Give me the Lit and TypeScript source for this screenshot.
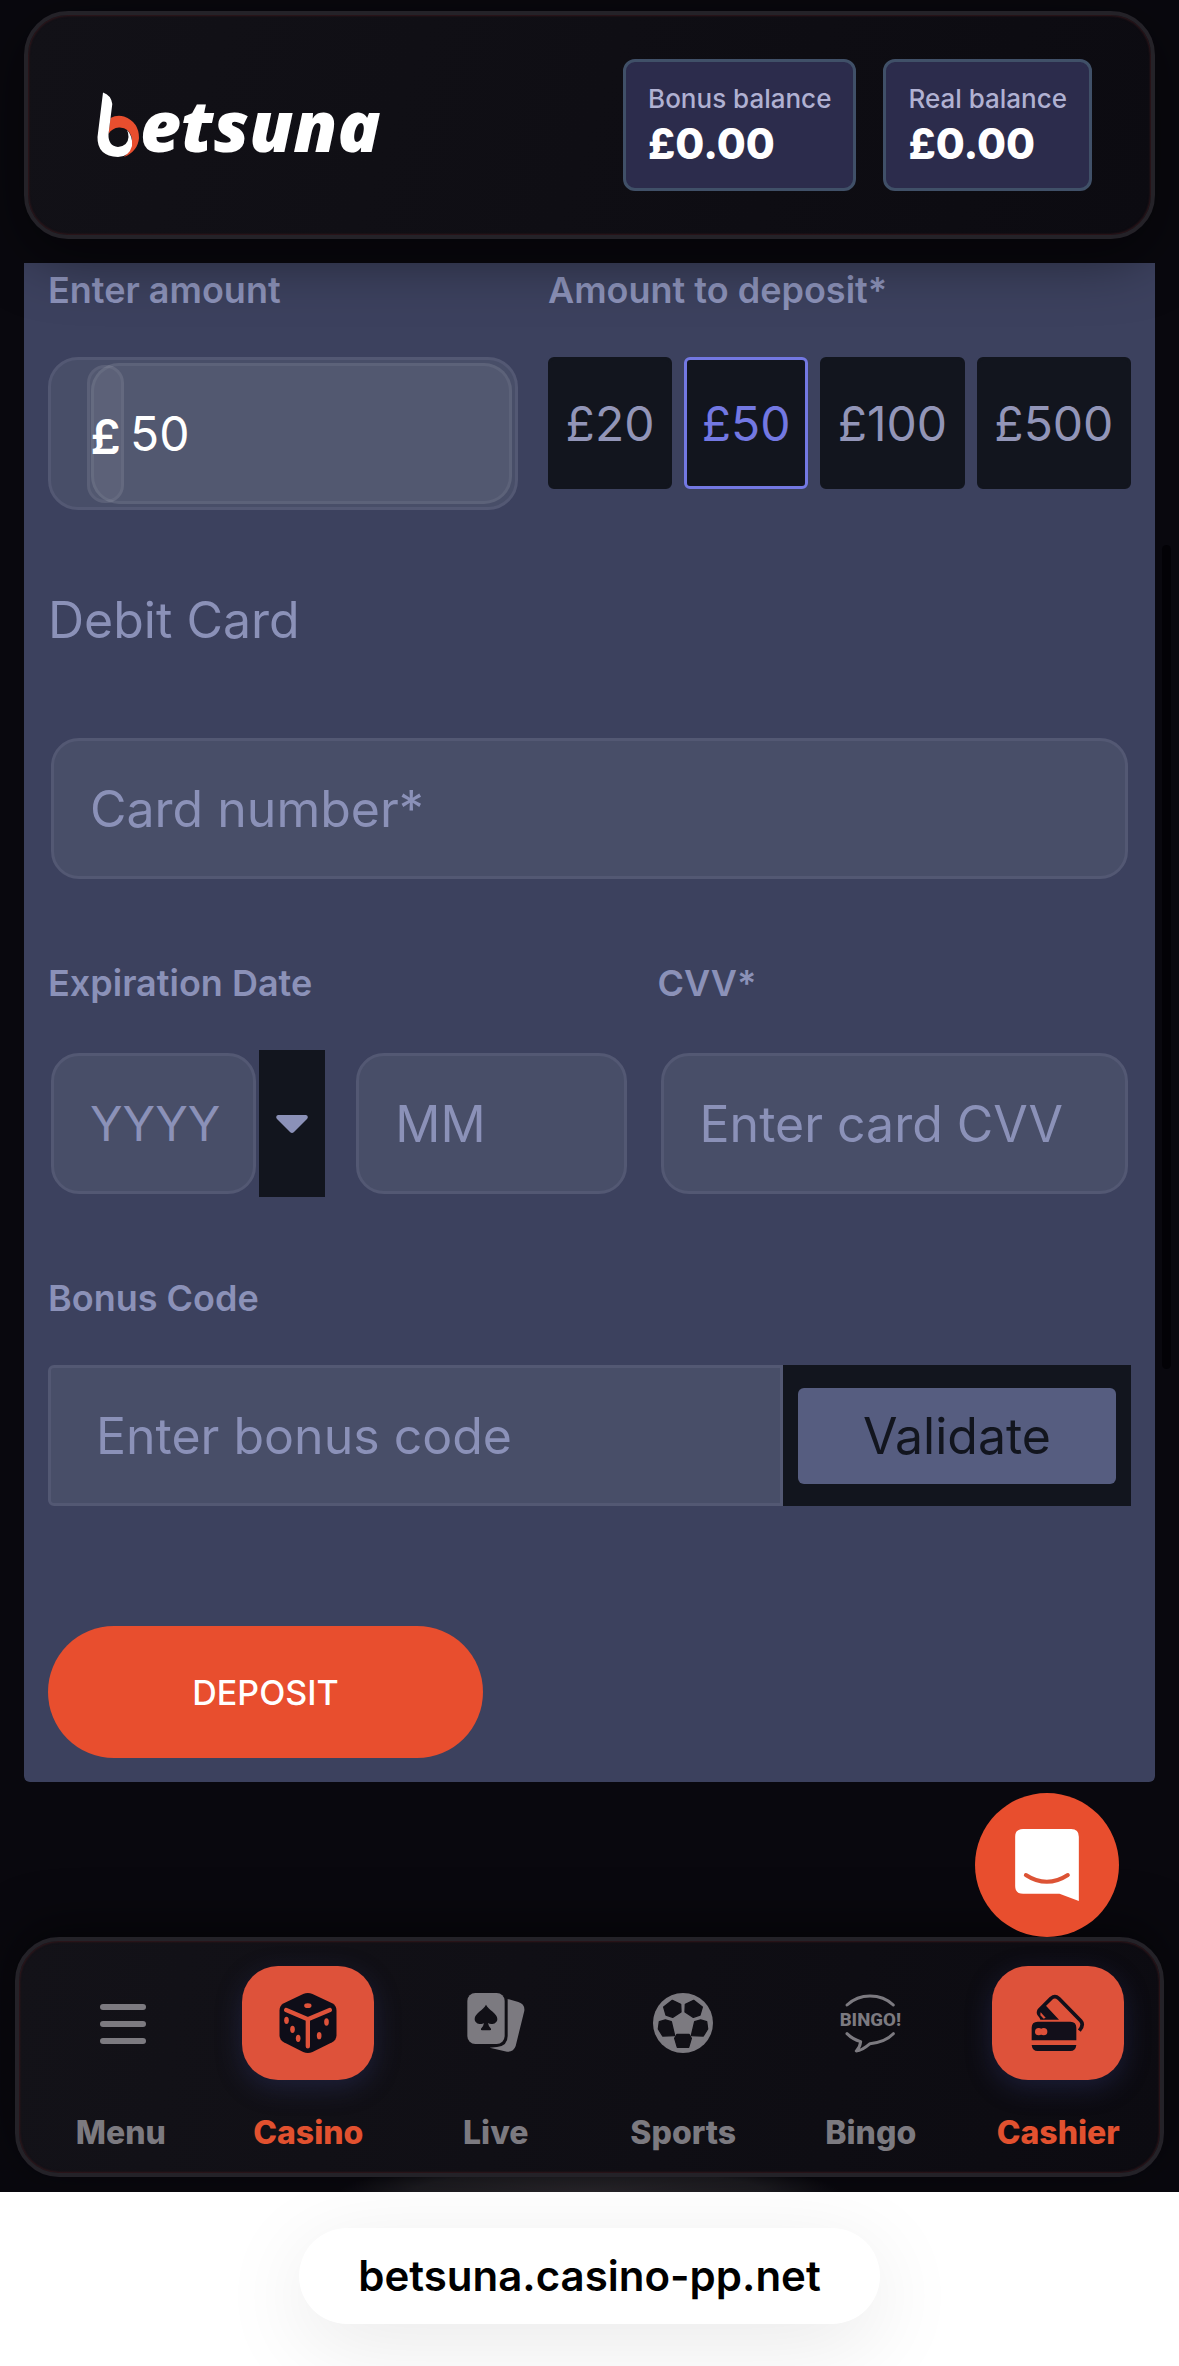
import { LitElement, html, css, svg } from "lit";
import { customElement, property, state } from "lit/decorators.js";
import { classMap } from "lit/directives/class-map.js";

const diceIcon = svg`
  <svg class="icon" viewBox="833 219 179 180" aria-hidden="true">
    <path fill="#0e0d18" d="M908 222Q922 216 936 222L995 250Q1008 257 1008 272V346Q1008 360 995 367L936 396Q922 402 908 396L850 367Q837 360 837 346V272Q837 257 850 250Z"/>
    <g fill="none" stroke="#de523a" stroke-width="13" stroke-linecap="round" stroke-linejoin="round">
      <path d="M857 270L922 298L988 270M922 298V379"/>
    </g>
    <g fill="#de523a">
      <ellipse cx="922" cy="257" rx="11" ry="7"/>
      <ellipse cx="858" cy="301" rx="7" ry="11"/><ellipse cx="876" cy="328" rx="7" ry="11"/><ellipse cx="893" cy="355" rx="7" ry="11"/>
      <ellipse cx="978" cy="306" rx="7" ry="11"/><ellipse cx="956" cy="347" rx="7" ry="11"/>
    </g>
  </svg>`;

const menuIcon = svg`
  <svg class="icon" viewBox="0 0 60 60" aria-hidden="true">
    <g fill="#7c7a80">
      <rect x="9" y="11" width="46" height="6" rx="3"/><rect x="9" y="28" width="46" height="6" rx="3"/><rect x="9" y="45" width="46" height="6" rx="3"/>
    </g>
  </svg>`;

const cardsIcon = svg`
  <svg class="icon" viewBox="197 219 180 180" aria-hidden="true">
    <rect x="201" y="219" width="112" height="153" rx="24" fill="#7c7a80"/>
    <path fill="#7c7a80" d="M322 237L354 246Q374 252 372 272L346 378Q340 396 320 395L268 383L290 381Q322 378 322 348Z"/>
    <path fill="#111016" d="M257 254C265 270 291 280 291 297C291 312 271 316 263 309Q264 318 272 326Q274 331 268 331H246Q240 331 242 326Q250 318 251 309C243 316 223 312 223 297C223 280 249 270 257 254Z"/>
  </svg>`;

const ballPanels = svg`
  <path d="M817 241L842 253L843 276L818 292L798 285L791 261Z"/>
  <path d="M796 300L814 305L824 347L788 348L775 327L778 305Z"/>`;

const ballIcon = svg`
  <svg class="icon" viewBox="759 219 180 180" aria-hidden="true">
    <circle cx="849" cy="309" r="90" fill="#7c7a80"/>
    <g fill="#111016" stroke="#111016" stroke-width="4" stroke-linejoin="round">
      ${ballPanels}
      <g transform="translate(1698 0) scale(-1 1)">${ballPanels}</g>
      <path d="M831 343H867L874 355L866 382H832L824 355Z"/>
    </g>
  </svg>`;

const bingoIcon = svg`
  <svg class="icon icon-wide" viewBox="414 215 195 180" aria-hidden="true">
    <g fill="none" stroke="#7c7a80" stroke-width="9" stroke-linecap="round" stroke-linejoin="round">
      <path d="M441 251Q470 224 510 224Q552 224 580 251"/>
      <path d="M441 337Q458 354 482 361Q480 378 469 389Q486 388 510 367Q556 362 580 337"/>
    </g>
    <text class="bingo-text" x="511" y="315" text-anchor="middle">BINGO!</text>
  </svg>`;

const cashierIcon = svg`
  <svg class="icon" viewBox="387 759 180 180" aria-hidden="true">
    <g fill="none" stroke="#120f1a" stroke-width="11" stroke-linejoin="round">
      <path d="M433 834Q413 823 421 810L456 775Q468 765 479 775L545 842Q556 854 541 872"/>
    </g>
    <path fill="#120f1a" d="M438 794L480 839H424L419 826L430 826L420 814Z"/>
    <path fill="#dd5039" d="M425 817L440 833L434 836L424 826Z"/>
    <path fill="#120f1a" d="M398 901V863Q398 845 416 845H514Q532 845 532 863V901ZM398 915H532Q530 933 514 933H416Q400 933 398 915Z"/>
    <circle cx="419" cy="875" r="11" fill="#dd5039"/><circle cx="434" cy="875" r="11" fill="#dd5039"/>
  </svg>`;

interface NavEntry {
  label: string;
  icon: unknown;
  active?: boolean;
}

const NAV: NavEntry[] = [
  { label: "Menu", icon: menuIcon },
  { label: "Casino", icon: diceIcon, active: true },
  { label: "Live", icon: cardsIcon },
  { label: "Sports", icon: ballIcon },
  { label: "Bingo", icon: bingoIcon },
  { label: "Cashier", icon: cashierIcon, active: true },
];

@customElement("balance-box")
class BalanceBox extends LitElement {
  @property() label = "";
  @property() value = "";

  static styles = css`
    :host {
      display: block;
      box-sizing: border-box;
      padding: 22px 22px 14px;
      border: 3px solid #405068;
      border-radius: 12px;
      background: #2c2c4c;
    }
    .label {
      font-size: 26px;
      line-height: 30px;
      font-weight: 500;
      color: #b0b1d2;
    }
    .value {
      font-size: 42px;
      line-height: 60px;
      font-weight: 800;
      color: #fff;
    }
  `;

  render() {
    return html`<div class="label">${this.label}</div>
      <div class="value">${this.value}</div>`;
  }
}

@customElement("site-header")
class SiteHeader extends LitElement {
  static styles = css`
    :host {
      display: flex;
      align-items: center;
      justify-content: space-between;
      box-sizing: border-box;
      padding: 44px 59px 44px 68px;
      border: 4px solid #242228;
      border-radius: 44px;
      background: linear-gradient(110deg, #121117, #0c0b11);
      box-shadow: 0 16px 60px rgba(0, 0, 0, 0.5), inset 0 0 2px 1px #32171b;
    }
    .logo {
      display: flex;
      align-items: flex-end;
      color: #fff;
      text-decoration: none;
    }
    .mark {
      display: block;
      width: 44px;
      height: 66px;
    }
    .word {
      font: italic 800 71px/66px "Open Sans", "Noto Sans", sans-serif;
    }
    .balances {
      display: flex;
      gap: 27px;
    }
  `;

  render() {
    return html`
      <a class="logo" href="#home" aria-label="betsuna">
        <svg class="mark" viewBox="96 92 44 66" aria-hidden="true">
          <path fill="#e84e2e" d="M110.5 118Q117 114.500 124 116.500Q139 122 139 138Q138 151 124 157Q133 149 132 138Q129 127 119 127.500Q112 128 108.500 134Z"/>
          <path fill="#fff" d="M103 92.500Q111 95 112.300 104L108.500 134Q108 146 118 147Q128 146 128.500 137Q128.500 133 127 130Q133 136 132 146Q129 157 118 157Q97 156 97.500 137Z"/>
        </svg>
        <span class="word">etsuna</span>
      </a>
      <div class="balances">
        <balance-box label="Bonus balance" value="£0.00"></balance-box>
        <balance-box label="Real balance" value="£0.00"></balance-box>
      </div>
    `;
  }
}

@customElement("deposit-form")
class DepositForm extends LitElement {
  @state() private amount = 50;

  static styles = css`
    :host {
      display: block;
    }
    form {
      box-sizing: border-box;
      padding: 1px 24px 24px;
      border-radius: 0 0 6px 6px;
      background: #3c415e;
      color: #8b91b8;
    }
    input,
    button {
      box-sizing: border-box;
      margin: 0;
      min-width: 0;
      font: inherit;
      font-size: 50px;
    }
    .row {
      display: grid;
      column-gap: 30px;
    }
    .amounts {
      grid-template-columns: 470fr 583fr;
    }
    .card-row {
      grid-template-columns: 277fr 276fr 473fr;
      margin-top: 75px;
      column-gap: 28px;
    }
    .label {
      display: block;
      margin-bottom: 41px;
      font-size: 36px;
      line-height: 52px;
      font-weight: 600;
    }
    .field {
      display: block;
      width: 100%;
      height: 141px;
      padding: 0 36px;
      border: 3px solid #535873;
      border-radius: 28px;
      outline: none;
      background: #484e68;
      color: #fff;
    }
    .field::placeholder {
      color: #8b91b8;
      opacity: 1;
    }
    .inset {
      padding: 3px;
    }
    .money {
      position: relative;
      box-sizing: border-box;
      height: 153px;
      padding: 3px 3px 3px 40px;
      border: 3px solid #535873;
      border-radius: 30px;
      background: #484e68;
    }
    .money-input {
      border-color: rgba(255, 255, 255, 0.06);
      background: rgba(255, 255, 255, 0.06);
      font-size: 48px;
    }
    .sign {
      position: absolute;
      left: 36px;
      top: 5px;
      box-sizing: border-box;
      width: 37px;
      height: 138px;
      border: 3px solid rgba(255, 255, 255, 0.05);
      border-radius: 18px;
      background: rgba(255, 255, 255, 0.06);
      color: #fff;
      font-size: 48px;
      line-height: 138px;
      font-weight: 600;
      display: flex;
      justify-content: center;
    }
    .chips {
      display: flex;
      gap: 12px;
    }
    .chip {
      flex: 1 1 auto;
      height: 132px;
      padding: 0;
      border: 3px solid #12151e;
      border-radius: 6px;
      background: #12151e;
      color: #9295b8;
      font-size: 48px;
    }
    .chip.selected {
      border-color: #7378e2;
      color: #7378e2;
    }
    h2 {
      margin: 74px 0 79px;
      font-size: 50px;
      line-height: 72px;
      font-weight: 400;
    }
    .year {
      display: flex;
    }
    .year .inset {
      flex: 1;
    }
    .year .field {
      padding-right: 8px;
      font-size: 48px;
    }
    .drop {
      display: flex;
      align-items: center;
      justify-content: center;
      width: 66px;
      height: 147px;
      padding: 0;
      border: 0;
      background: #12151e;
    }
    .drop svg {
      width: 32px;
      height: 20px;
    }
    .split {
      padding-top: 93px;
    }
    .bonus {
      display: flex;
      margin-top: 75px;
      flex-wrap: wrap;
    }
    .bonus .label {
      flex: 1 0 100%;
    }
    .bonus .field {
      flex: 1;
      padding: 0 45px;
      border-radius: 6px 0 0 6px;
    }
    .validate-wrap {
      display: flex;
      align-items: center;
      padding: 0 15px;
      background: #12151e;
    }
    .validate {
      width: 318px;
      height: 96px;
      border: 0;
      border-radius: 6px;
      background: #565d80;
      color: #12151e;
    }
    .deposit {
      display: block;
      width: 435px;
      height: 132px;
      margin-top: 120px;
      border: 0;
      border-radius: 66px;
      background: #e84e2e;
      color: #fff;
      font-size: 34px;
      font-weight: 500;
    }
  `;

  render() {
    return html`
      <form>
        <div class="row amounts">
          <div>
            <label class="label" for="amount">Enter amount</label>
            <div class="money">
              <input id="amount" class="field money-input" inputmode="numeric" .value=${String(this.amount)} />
              <span class="sign">£</span>
            </div>
          </div>
          <div role="group" aria-labelledby="presets">
            <span class="label" id="presets">Amount to deposit*</span>
            <div class="chips">
              ${[20, 50, 100, 500].map(
                (n) => html`<button
                  type="button"
                  class=${classMap({ chip: true, selected: n === this.amount })}
                  aria-pressed=${n === this.amount}
                  @click=${() => (this.amount = n)}
                >£${n}</button>`
              )}
            </div>
          </div>
        </div>

        <h2>Debit Card</h2>
        <div class="inset"><input class="field" aria-label="Card number" placeholder="Card number*" /></div>

        <div class="row card-row">
          <div>
            <label class="label" for="year">Expiration Date</label>
            <div class="year">
              <div class="inset"><input id="year" class="field" placeholder="YYYY" /></div>
              <button type="button" class="drop" aria-label="Choose year">
                <svg viewBox="0 0 32 20" aria-hidden="true"><path fill="#8b91b8" d="M2 1H30Q33 2 31 5L18 18Q16 20 14 18L1 5Q-1 2 2 1Z"/></svg>
              </button>
            </div>
          </div>
          <div class="split">
            <div class="inset"><input class="field" aria-label="Expiration month" placeholder="MM" /></div>
          </div>
          <div>
            <label class="label" for="cvv">CVV*</label>
            <div class="inset"><input id="cvv" class="field" placeholder="Enter card CVV" /></div>
          </div>
        </div>

        <div class="bonus">
          <label class="label" for="bonus">Bonus Code</label>
          <input id="bonus" class="field" placeholder="Enter bonus code" />
          <div class="validate-wrap"><button type="button" class="validate">Validate</button></div>
        </div>

        <button type="button" class="deposit">DEPOSIT</button>
      </form>
    `;
  }
}

@customElement("bottom-nav")
class BottomNav extends LitElement {
  static styles = css`
    :host {
      display: block;
      position: relative;
    }
    nav {
      position: relative;
      display: grid;
      grid-template-columns: repeat(6, 1fr);
      box-sizing: border-box;
      height: 240px;
      padding: 25px 8px 0;
      border: 4px solid #242228;
      border-radius: 44px;
      background: linear-gradient(100deg, #131218, #0c0b11);
      box-shadow: 0 -10px 50px rgba(0, 0, 0, 0.5), inset 0 0 2px 1px #32171b;
    }
    .item {
      display: flex;
      flex-direction: column;
      align-items: center;
      gap: 35px;
      color: #7c7a80;
      font-size: 32px;
      line-height: 36px;
      font-weight: 800;
      text-decoration: none;
    }
    .tile {
      display: flex;
      align-items: center;
      justify-content: center;
      width: 132px;
      height: 114px;
      border-radius: 36px;
    }
    .active {
      color: #e2512f;
    }
    .active .tile {
      background: #de523a;
      box-shadow: 0 8px 26px rgba(50, 54, 110, 0.4);
    }
    .icon {
      display: block;
      width: 60px;
      height: 60px;
    }
    .icon-wide {
      width: 65px;
    }
    .bingo-text {
      font: 800 56px Roboto, "Liberation Sans", sans-serif;
      fill: #7c7a80;
    }
    .chat {
      position: absolute;
      right: 45px;
      bottom: 100%;
      width: 144px;
      height: 144px;
      padding: 0;
      border: 0;
      border-radius: 50%;
      background: #e84e2e;
    }
    .chat svg {
      display: block;
      width: 64px;
      height: 72px;
      margin: 0 auto;
    }
  `;

  render() {
    return html`
      <nav>
        ${NAV.map(
          (n) => html`<a href="#${n.label.toLowerCase()}" class=${classMap({ item: true, active: !!n.active })}>
            <span class="tile">${n.icon}</span><span>${n.label}</span>
          </a>`
        )}
      </nav>
      <button type="button" class="chat" aria-label="Open chat">
        <svg viewBox="346 267 191 216" aria-hidden="true">
          <path fill="#fff" d="M370 267H514Q537 267 537 290V483L479 461H370Q346 461 346 438V290Q346 267 370 267Z"/>
          <path fill="none" stroke="#dc5335" stroke-width="12" stroke-linecap="round" d="M378 405Q441 446 504 405"/>
        </svg>
      </button>
    `;
  }
}

@customElement("app-root")
class AppRoot extends LitElement {
  static styles = css`
    :host {
      display: block;
      font-family: Inter, "Liberation Sans", sans-serif;
      background: #fff;
    }
    .page {
      display: flex;
      flex-direction: column;
      background: #09080e;
      overflow: hidden;
    }
    .top {
      position: relative;
      z-index: 1;
      margin: 0 24px;
      padding-top: 11px;
    }
    .body {
      position: relative;
      padding: 24px 24px 155px;
    }
    .scroll {
      position: absolute;
      right: 8px;
      top: 306px;
      width: 9px;
      height: 824px;
      border-radius: 5px;
      background: #030206;
    }
    .bottom {
      padding: 0 15px 15px;
      background: radial-gradient(ellipse 250px 30px at 50% 100%, #29262b, #1d1c21 70%, transparent);
    }
    .browser {
      display: flex;
      justify-content: center;
      padding: 36px 0 42px;
      overflow: hidden;
      background: #fff;
    }
    .address {
      padding: 24px 59px;
      border-radius: 48px;
      background: #fff;
      box-shadow: 0 20px 90px rgba(0, 0, 0, 0.09);
      color: #000;
      font-size: 42px;
      line-height: 48px;
      font-weight: 600;
      text-decoration: none;
    }
  `;

  render() {
    return html`
      <div class="page">
        <div class="top"><site-header></site-header></div>
        <main class="body">
          <deposit-form></deposit-form>
          <div class="scroll"></div>
        </main>
        <div class="bottom"><bottom-nav></bottom-nav></div>
      </div>
      <footer class="browser"><a class="address" href="#site">betsuna.casino-pp.net</a></footer>
    `;
  }
}
